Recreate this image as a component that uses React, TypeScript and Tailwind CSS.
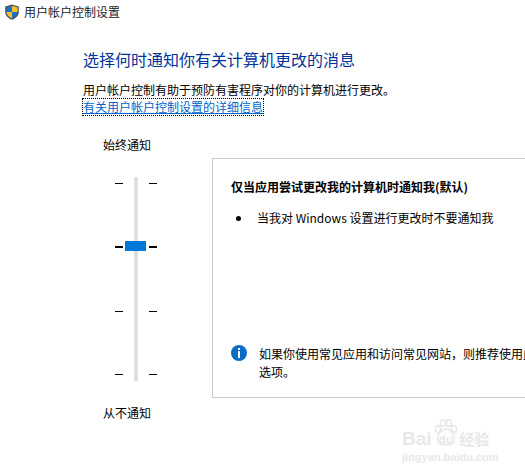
import React from 'react';

const font = { fontFamily: '"Noto Sans CJK SC", sans-serif' };

const Shield = () => (
  <svg width="16" height="16" viewBox="0 0 16 16" className="shrink-0">
    <path d="M8 0.5 L14.8 2.5 V8 C14.8 11.6 12 14.2 8 15.8 C4 14.2 1.2 11.6 1.2 8 V2.5 Z" fill="#4a5560" />
    <path d="M8 1.8 L2.4 3.4 V8 H8 Z" fill="#1f6fc4" />
    <path d="M8 1.8 L13.6 3.4 V8 H8 Z" fill="#f6c02c" />
    <path d="M2.4 8 H8 V14.4 C5 13.2 2.6 11 2.4 8 Z" fill="#f6c02c" />
    <path d="M13.6 8 H8 V14.4 C11 13.2 13.4 11 13.6 8 Z" fill="#1f6fc4" />
  </svg>
);

const InfoIcon = () => (
  <svg width="16" height="16" viewBox="0 0 16 16" className="shrink-0">
    <circle cx="8" cy="8" r="8" fill="#0a6cc4" />
    <rect x="7" y="3" width="2" height="2" fill="#fff" />
    <rect x="7" y="6.2" width="2" height="6.8" fill="#fff" />
  </svg>
);

const Ticks = ({ thick }: { thick?: number }) => (
  <div className="flex h-[193px] w-2 flex-col justify-between">
    {[0, 1, 2, 3].map((i) => (
      <div key={i} className={i === thick ? 'h-[2px] w-2 bg-black' : 'h-px w-2 bg-black'} />
    ))}
  </div>
);

const Slider = () => (
  <div className="relative ml-[32px] mt-[23px] flex h-[204px] w-[42px] items-center justify-between">
    <Ticks thick={1} />
    <div className="h-[204px] w-1 bg-[#d9dcdc] border-x border-[#e6e6e6]" />
    <Ticks thick={1} />
    {/* thumb sits on top of the track */}
    <div className="absolute left-[10px] top-[64px] h-[10px] w-[21px] bg-[#0078d7]" />
  </div>
);

const Watermark = () => (
  <div
    className="absolute left-[402px] top-[418px] w-[94px] select-none text-[#e8e8e8]"
    style={{ fontFamily: '"Liberation Sans", "Noto Sans CJK SC", sans-serif' }}
  >
    <div className="flex h-[31px] items-end pb-[1px]">
      <span className="text-[19px] font-bold leading-[18px]">Bai</span>
      <span className="relative ml-[2px] text-xs font-bold leading-[16px]">
        <svg width="26" height="30" viewBox="0 0 26 30" className="absolute -top-[14px] -left-[1px]">
          <g fill="none" stroke="#e8e8e8" strokeWidth="1.5">
            <ellipse cx="5" cy="11" rx="2.5" ry="3.5" />
            <ellipse cx="10" cy="5" rx="2.5" ry="3.5" />
            <ellipse cx="16" cy="5" rx="2.5" ry="3.5" />
            <ellipse cx="21" cy="11" rx="2.5" ry="3.5" />
            <path d="M13 11 C8 11 3 19 5 24 C7 28 19 28 21 24 C23 19 18 11 13 11 Z" />
          </g>
        </svg>
        <span className="relative px-[5px]">du</span>
      </span>
      <span className="ml-[1px] text-[15px] font-bold leading-[16px]">经验</span>
    </div>
    <div className="mt-[2px] text-[11px] font-bold leading-[13px]">jingyan.baidu.com</div>
  </div>
);

export default function App() {
  return (
    <div className="relative h-[476px] w-[525px] overflow-hidden bg-white text-xs text-black" style={font}>
      {/* title bar */}
      <div className="flex h-[24px] items-center gap-[4px] pl-[4px] text-[#222]">
        <Shield />
        <span>用户帐户控制设置</span>
      </div>

      <div className="pl-[83px]">
        <h1 className="mt-[23px] text-base leading-[24px] text-[#003399]">选择何时通知你有关计算机更改的消息</h1>
        <p className="mt-[10px] leading-[18px]">用户帐户控制有助于预防有害程序对你的计算机进行更改。</p>
        <a className="block w-fit leading-[16px] text-[#0066cc] underline outline-1 outline-dotted outline-black">
          有关用户帐户控制设置的详细信息
        </a>

        <div className="mt-[21px] flex">
          {/* slider column */}
          <div className="w-[129px] shrink-0">
            <div className="ml-[20px] leading-[18px]">始终通知</div>
            <Slider />
            <div className="ml-[20px] mt-[23px] leading-[18px]">从不通知</div>
          </div>

          {/* description panel */}
          <div className="mt-[22px] flex h-[240px] w-[340px] shrink-0 flex-col border border-[#c8c8c8] pl-[18px]">
            <div className="mt-[19px] font-bold leading-[18px]">仅当应用尝试更改我的计算机时通知我(默认)</div>
            <div className="mt-[13px] flex items-center leading-[18px]">
              <span className="ml-[5px] h-[5px] w-[5px] rounded-full bg-black" />
              <span className="ml-[16px]">当我对 Windows 设置进行更改时不要通知我</span>
            </div>
            <div className="mt-[118px] flex items-start gap-[12px]">
              <InfoIcon />
              <p className="w-[280px] leading-[18px]">如果你使用常见应用和访问常见网站，则推荐使用此选项。</p>
            </div>
          </div>
        </div>
      </div>
      <Watermark />
    </div>
  );
}
